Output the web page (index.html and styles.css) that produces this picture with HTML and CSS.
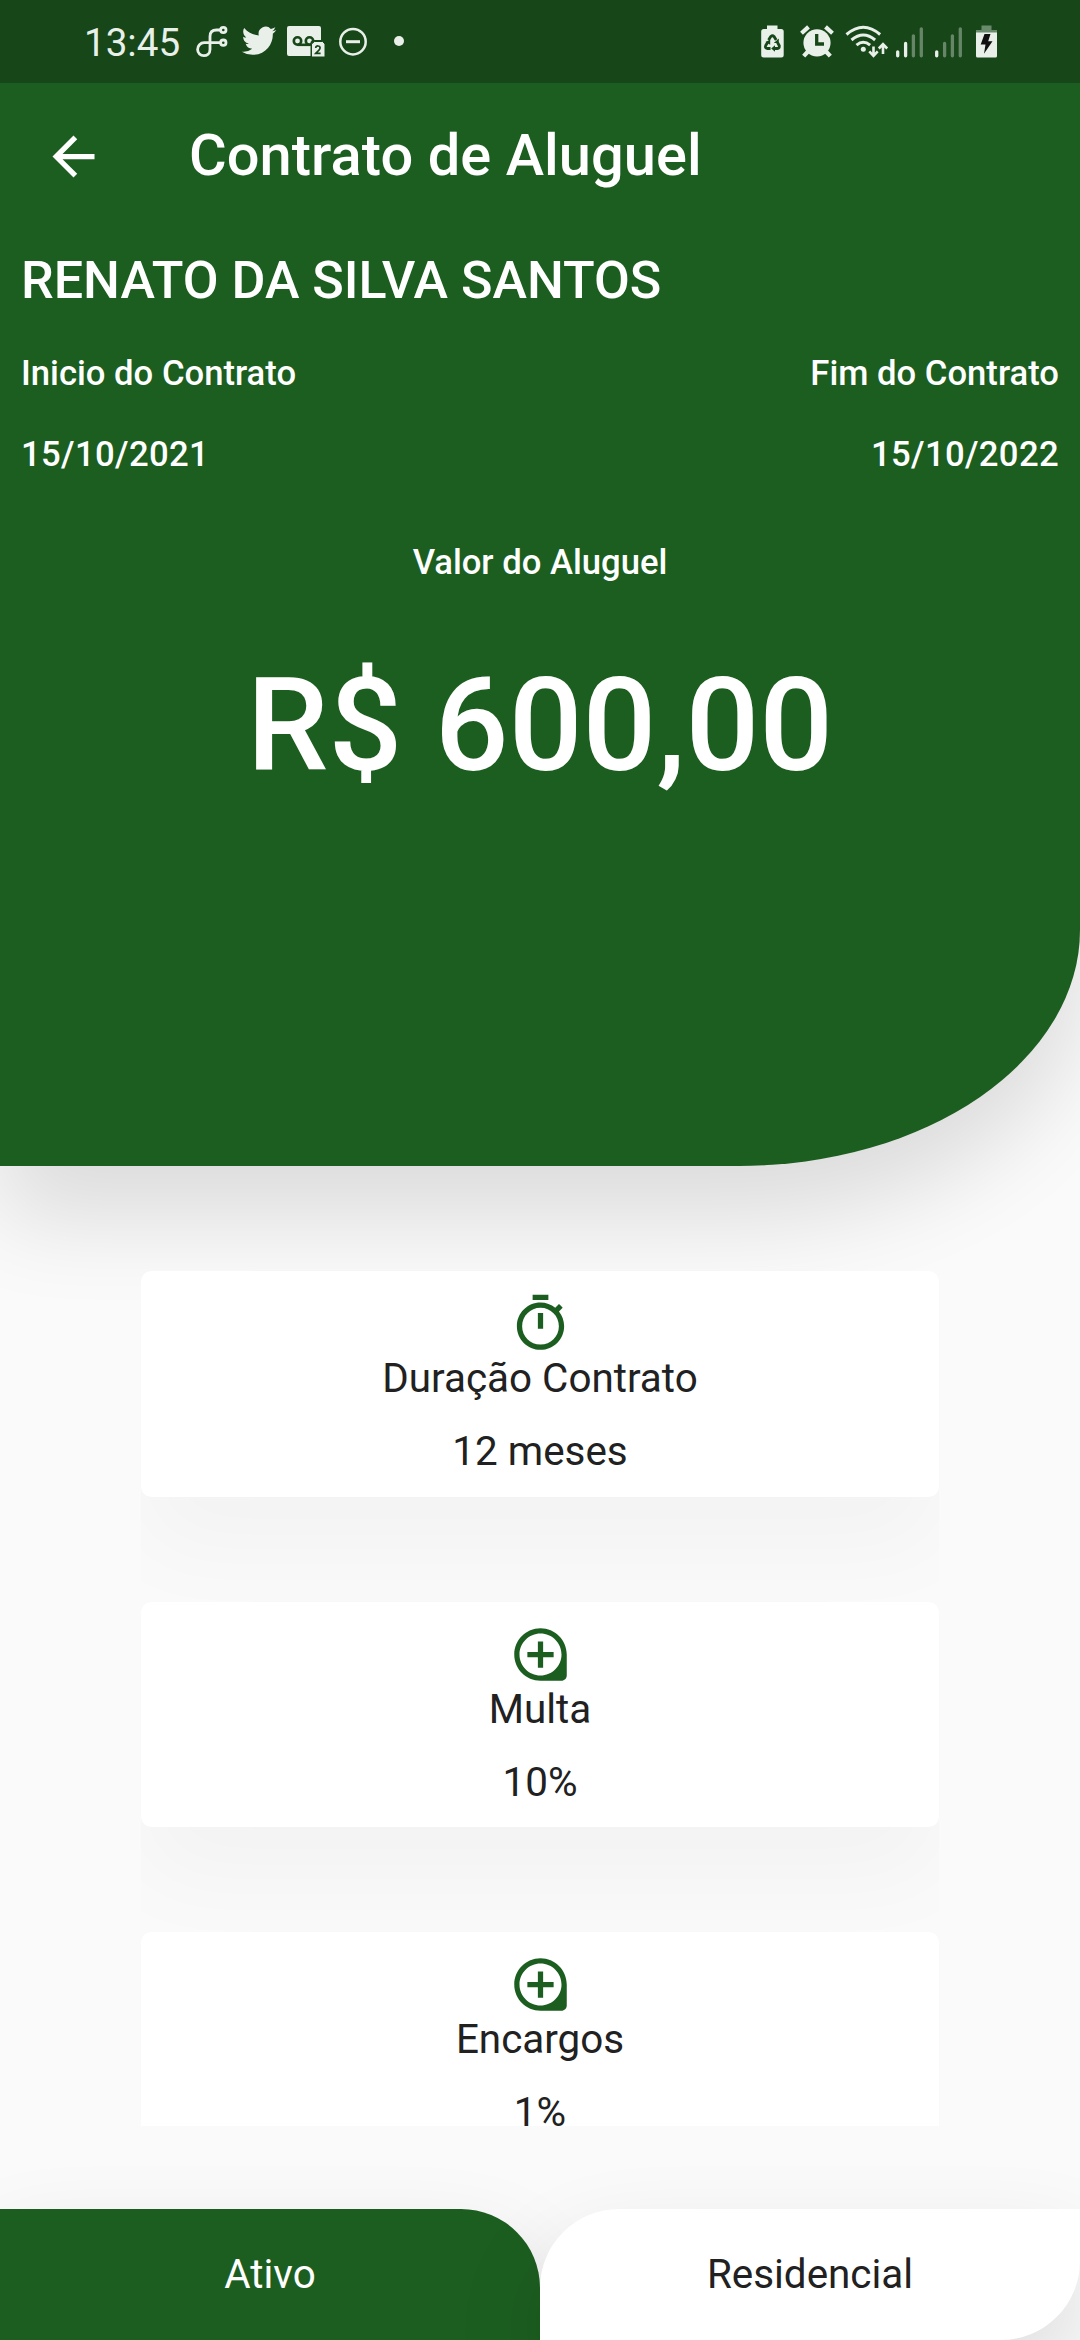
FILE: index.html
```html
<!DOCTYPE html>
<html lang="pt-BR">
<head>
<meta charset="utf-8">
<title>Contrato de Aluguel</title>
<link rel="stylesheet" href="styles.css">
</head>
<body>
<div class="screen">
  <header class="hero">
    <div class="status">
      <span class="clock">13:45</span>
      <svg class="status-icon" width="46" height="34" viewBox="188 25 46 34" fill="none" stroke="currentColor" stroke-width="2.8">
        <circle cx="223.300" cy="30" r="2.700"/>
        <circle cx="223.300" cy="42.700" r="2.700"/>
        <path d="M220.500 30h-4c-5 0-6.500 2.500-6.500 6.500v13c0 4-3 6.200-6.200 6.200s-6.200-2.600-6.200-6.200 2.800-6.800 6.600-6.800h16.300"/>
      </svg>
      <svg class="status-icon" width="47" height="34" viewBox="234 25 47 34" fill="currentColor">
        <path transform="translate(241.800 23.500) scale(1.440)" d="M23.950 4.570a10 10 0 0 1-2.820.770 4.960 4.960 0 0 0 2.160-2.720c-.950.560-2 .960-3.120 1.180a4.920 4.920 0 0 0-8.380 4.480C7.690 8.100 4.070 6.130 1.640 3.160a4.820 4.820 0 0 0-.670 2.480c0 1.700.870 3.210 2.190 4.100a4.900 4.900 0 0 1-2.230-.620v.060a4.920 4.920 0 0 0 3.950 4.830 5 5 0 0 1-2.210.080 4.940 4.940 0 0 0 4.600 3.420A9.870 9.870 0 0 1 0 19.540a14 14 0 0 0 7.550 2.210c9.050 0 14-7.500 14-13.980l-.020-.630a9.900 9.900 0 0 0 2.420-2.570z"/>
      </svg>
      <svg class="status-icon" width="50" height="34" viewBox="281 25 50 34">
        <path fill="currentColor" d="M289 26h30a2 2 0 0 1 2 2v12h-8.500l-2 2v14H289a2 2 0 0 1-2-2V28a2 2 0 0 1 2-2z"/>
        <g fill="none" stroke="#174619" stroke-width="2.600"><circle cx="297.500" cy="41" r="3.700"/><circle cx="309.500" cy="41" r="3.700"/><path d="M297.500 44.800h13"/></g>
        <path fill="currentColor" stroke="#174619" stroke-width="1" d="M311.500 57V44l3-2.500h8l2.500 2.500v13z"/>
        <path fill="none" stroke="#174619" stroke-width="1.700" d="M315.700 48c.300-2.800 4.400-2.600 4.400 0 0 1.700-2.600 3.500-4.300 5.300h4.800"/>
      </svg>
      <svg class="status-icon" width="52" height="34" viewBox="331 25 52 34" fill="none" stroke="currentColor" stroke-width="2.500">
        <circle cx="353" cy="41.700" r="12.700"/><path d="M346 41.700h14" stroke-width="3"/>
      </svg>
      <svg class="status-icon" width="42" height="34" viewBox="383 25 42 34" fill="currentColor"><circle cx="399" cy="41" r="5"/></svg>
      <span class="spacer"></span>
      <svg class="status-icon" width="42" height="34" viewBox="752 25 42 34">
        <path fill="currentColor" d="M767 25.500h10.500V29h3.700a2.500 2.500 0 0 1 2.500 2.500V55a2.500 2.500 0 0 1-2.500 2.500h-17.500a2.500 2.500 0 0 1-2.500-2.500V31.500a2.500 2.500 0 0 1 2.500-2.500h3.300z"/>
        <path fill="none" stroke="#174619" stroke-width="2.800" d="M768.500 40l2.300-3.500q1.700-1.500 3.200 0l2.200 3.500M777.500 42.500l1.800 3.200q.300 2.800-1.800 2.800h-4M770.500 48.500h-3q-3-.500-1.800-3l2-3.200"/>
        <path fill="#174619" d="M778.800 38.500v4.500h-5zM775 45.200v6.600l-3.800-3.300zM765.500 42l4.700-2.500v5.300z"/>
      </svg>
      <svg class="status-icon" width="47" height="34" viewBox="794 25 47 34">
        <g stroke="currentColor" fill="none" stroke-width="4.200"><path d="M801.500 33.200l7-6.300M832.500 33.200l-7-6.300M808 51.500l-4.300 4.700M826 51.500l4.300 4.700"/></g>
        <circle cx="817" cy="42.800" r="13.600" fill="currentColor"/>
        <path d="M816.700 34v10h7.300" fill="none" stroke="#174619" stroke-width="3.300"/>
      </svg>
      <svg class="status-icon" width="52" height="34" viewBox="841 25 52 34" fill="none" stroke="currentColor">
        <g stroke-width="3"><path d="M846.500 34.500q16.800-14.500 33.600 0M851.500 40q11.800-10 23.600 0M856.500 45.200q6.800-5.800 13.600 0"/></g>
        <circle cx="863.300" cy="49.200" r="2.500" fill="currentColor" stroke="none"/>
        <path stroke-width="2.600" d="M873.500 46.500v9M869.300 51.300l4.200 4.500 4.200-4.500M883 54v-9.300M878.800 48.500l4.200-4.300 4.200 4.300"/>
      </svg>
      <svg class="status-icon" width="39" height="34" viewBox="893 25 39 34" fill="none" stroke="currentColor" stroke-width="3.300" stroke-linecap="round">
        <path d="M897.700 51.800v4M905.600 43.500v12.300"/><path opacity=".38" d="M913.400 35.800v20M921.300 28.800v27"/>
      </svg>
      <svg class="status-icon" width="40" height="34" viewBox="932 25 40 34" fill="none" stroke="currentColor" stroke-width="3.300" stroke-linecap="round">
        <path d="M936.700 51.800v4"/><path opacity=".38" d="M944.600 43.500v12.300M952.400 35.800v20M960.300 28.800v27"/>
      </svg>
      <svg class="status-icon" width="30" height="34" viewBox="972 25 30 34">
        <path fill="currentColor" opacity=".4" d="M981.500 25.500h10V30h5.500v3h-21v-3h5.500z"/>
        <path fill="currentColor" d="M976 32.500h21V56q0 1.500-1.500 1.500h-18Q976 57.500 976 56z"/>
        <path fill="#111" d="M984.500 34h6l-2.300 7.300h4.300L984 53.800l1.500-9.300h-4.800z"/>
      </svg>
    </div>
    <div class="appbar">
      <svg class="icon" viewBox="0 0 24 24" fill="currentColor"><path d="M20 11H7.830l5.590-5.590L12 4l-8 8 8 8 1.410-1.410L7.830 13H20v-2z"/></svg>
      <h1 class="title">Contrato de Aluguel</h1>
    </div>
    <div class="name">RENATO DA SILVA SANTOS</div>
    <div class="row row-labels"><span>Inicio do Contrato</span><span>Fim do Contrato</span></div>
    <div class="row row-dates"><span>15/10/2021</span><span>15/10/2022</span></div>
    <div class="rent-label">Valor do Aluguel</div>
    <div class="rent-value">R$ 600,00</div>
  </header>

  <main class="list">
    <section class="card">
      <svg class="icon" viewBox="0 0 24 24" fill="currentColor"><path d="M15 1H9v2h6V1zm-4 13h2V8h-2v6zm8.030-6.610l1.420-1.420c-.430-.510-.900-.990-1.410-1.410l-1.420 1.420C16.070 4.740 14.120 4 12 4c-4.970 0-9 4.030-9 9s4.020 9 9 9 9-4.030 9-9c0-2.120-.740-4.070-1.970-5.610zM12 20c-3.870 0-7-3.130-7-7s3.130-7 7-7 7 3.130 7 7-3.130 7-7 7z"/></svg>
      <span class="card-title">Duração Contrato</span>
      <span class="card-value">12 meses</span>
    </section>
    <section class="card">
      <svg class="icon" viewBox="0 0 24 24" fill="currentColor"><path d="M13 7h-2v4H7v2h4v4h2v-4h4v-2h-4V7zm-1-5C6.490 2 2 6.490 2 12s4.490 10 10 10h8c1.100 0 2-.900 2-2v-8c0-5.510-4.490-10-10-10zm0 18c-4.410 0-8-3.590-8-8s3.590-8 8-8 8 3.590 8 8-3.590 8-8 8z"/></svg>
      <span class="card-title">Multa</span>
      <span class="card-value">10%</span>
    </section>
    <section class="card">
      <svg class="icon" viewBox="0 0 24 24" fill="currentColor"><path d="M13 7h-2v4H7v2h4v4h2v-4h4v-2h-4V7zm-1-5C6.490 2 2 6.490 2 12s4.490 10 10 10h8c1.100 0 2-.900 2-2v-8c0-5.510-4.490-10-10-10zm0 18c-4.410 0-8-3.590-8-8s3.590-8 8-8 8 3.590 8 8-3.590 8-8 8z"/></svg>
      <span class="card-title">Encargos</span>
      <span class="card-value">1%</span>
    </section>
  </main>

  <footer class="tabs">
    <div class="tab tab-active">Ativo</div>
    <div class="tab tab-type">Residencial</div>
  </footer>
</div>
</body>
</html>
```

FILE: styles.css
```css
* {
  box-sizing: border-box;
}

body {
  margin: 0;
  background: #fafafa;
  font-family: Roboto, "Liberation Sans", sans-serif;
}

.screen {
  width: 1080px;
  height: 2340px;
  overflow: hidden;
  display: flex;
  flex-direction: column;
}

.hero {
  height: 1166px;
  flex: none;
  background: #1c5e20;
  color: #fff;
  font-weight: 500;
  border-bottom-right-radius: 341px 236px;
  box-shadow: 0 52px 93px rgba(0, 0, 0, 0.12);
}

.status {
  height: 83px;
  padding: 0 78px 0 84px;
  background: #174619;
  color: #e9f0e9;
  display: flex;
  align-items: center;
}

.clock {
  width: 104px;
  padding-top: 2px;
  font-size: 38.6px;
  font-weight: 400;
  line-height: 46px;
}

.status-icon {
  flex: none;
}

.spacer {
  flex: 1;
}

.icon {
  width: 63px;
  height: 63px;
  flex: none;
}

.appbar {
  height: 147px;
  padding-left: 42px;
  display: flex;
  align-items: center;
  gap: 84px;
}

.title {
  margin: 0;
  padding-bottom: 3px;
  font-size: 57.75px;
  font-weight: 500;
  line-height: 68px;
  letter-spacing: 0.07px;
}

.name {
  margin: 20px 21px 0;
  font-size: 52px;
  line-height: 61px;
}

.row {
  display: flex;
  justify-content: space-between;
  padding: 0 21px;
  font-size: 34.65px;
  line-height: 41px;
}

.row-labels {
  margin-top: 42px;
}

.row-dates {
  margin-top: 40px;
  letter-spacing: 0.35px;
}

.rent-label {
  margin-top: 67px;
  font-size: 34.65px;
  line-height: 41px;
  text-align: center;
}

.rent-value {
  margin-top: 67px;
  font-size: 130px;
  line-height: 152px;
  text-align: center;
}

.list {
  width: 798px;
  height: 960px;
  margin: 0 auto;
  padding-top: 105px;
  flex: none;
  overflow: hidden;
  display: flex;
  flex-direction: column;
  gap: 105px;
}

.card {
  height: 225.7px;
  padding-top: 21px;
  flex: none;
  display: flex;
  flex-direction: column;
  align-items: center;
  background: #fff;
  border-radius: 10.5px;
  color: #1c5e20;
  box-shadow: 0 52px 93px rgba(0, 0, 0, 0.033);
}

.card-title,
.card-value {
  color: #212121;
  font-size: 40.4px;
  line-height: 47px;
}

.card-value {
  margin-top: 26px;
}

.tabs {
  margin-top: auto;
  flex: none;
  display: flex;
}

.tab {
  flex: 1;
  height: 131.25px;
  display: flex;
  align-items: center;
  justify-content: center;
  font-size: 40.4px;
  line-height: 47px;
  box-shadow: 0 39px 93px rgba(0, 0, 0, 0.12);
}

.tab-active {
  background: #1c5e20;
  color: #fff;
  border-top-right-radius: 79px;
}

.tab-type {
  background: #fff;
  color: #212121;
  border-radius: 79px 0 79px 0;
}
```
